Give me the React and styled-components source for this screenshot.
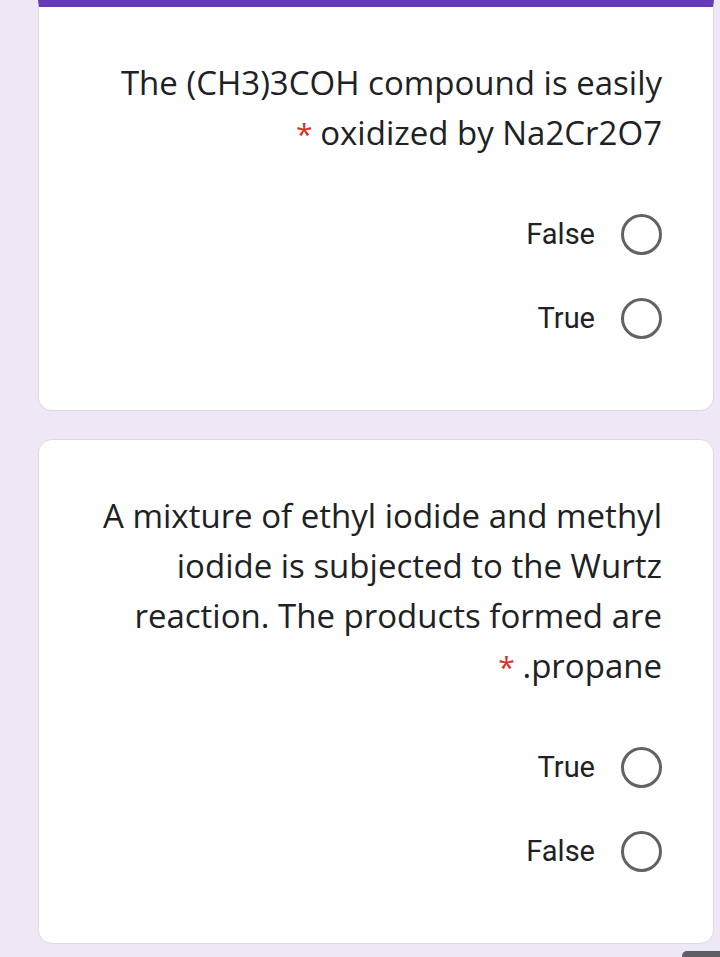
import styled, { createGlobalStyle } from "styled-components";

const GlobalStyle = createGlobalStyle`
  html, body {
    margin: 0;
    padding: 0;
    background: #ede7f6;
  }
`;

const Page = styled.div`
  min-height: 957px;
  padding: 0 6px 40px 38px;
  display: flex;
  flex-direction: column;
  gap: 28px;
  box-sizing: border-box;
`;

const Card = styled.div`
  background: #fff;
  border: 1px solid #dadce0;
  border-top: ${(p) => (p.$accent ? "7px solid #673ab7" : "1px solid #dadce0")};
  border-radius: ${(p) => (p.$accent ? "0 0 14px 14px" : "14px")};
  padding: 51px 51px 50px 30px;
  direction: rtl;
  display: flex;
  flex-direction: column;
  align-items: flex-start;
`;

const Question = styled.div`
  font-family: "Open Sans", Lato, sans-serif;
  font-size: 33px;
  line-height: 50px;
  color: #202124;
  text-align: right;
  margin-bottom: 33px;
`;

const Star = styled.span`
  color: #d93025;
  font-size: 30px;
`;

const Option = styled.label`
  height: 84px;
  display: flex;
  align-items: center;
  gap: 26px;
  font-family: Roboto, "Liberation Sans", sans-serif;
  font-size: 29px;
  color: #202124;
`;

const Radio = styled.span`
  width: 35px;
  height: 35px;
  border: 3px solid #5f6368;
  border-radius: 50%;
  flex-shrink: 0;
`;

const Peek = styled.div`
  position: fixed;
  right: 0;
  bottom: 0;
  width: 38px;
  height: 6px;
  background: #5f5d66;
  border-radius: 5px 0 0 0;
`;

const questions = [
  {
    lines: ["The (CH3)3COH compound is easily", "oxidized by Na2Cr2O7"],
    options: ["False", "True"],
    accent: true,
  },
  {
    lines: [
      "A mixture of ethyl iodide and methyl",
      "iodide is subjected to the Wurtz",
      "reaction. The products formed are",
      "propane.",
    ],
    options: ["True", "False"],
  },
];

export default function App() {
  return (
    <>
      <GlobalStyle />
      <Page>
        {questions.map((q, i) => (
          <Card key={i} $accent={q.accent}>
            <Question>
              {q.lines.map((line, j) => (
                <div key={j}>
                  {line}
                  {j === q.lines.length - 1 && <Star> *</Star>}
                </div>
              ))}
            </Question>
            {q.options.map((o) => (
              <Option key={o}>
                <Radio />
                {o}
              </Option>
            ))}
          </Card>
        ))}
      </Page>
      <Peek />
    </>
  );
}
